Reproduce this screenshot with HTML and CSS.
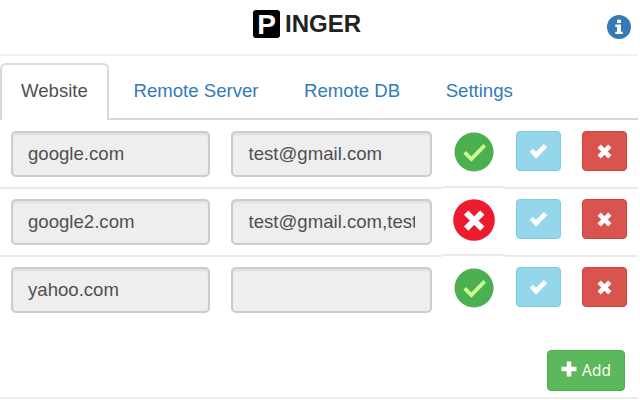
FILE: index.html
```html
<!DOCTYPE html>
<html lang="en">
<head>
<meta charset="utf-8">
<title>Pinger</title>
<link rel="stylesheet" href="styles.css">
</head>
<body>
<svg class="defs" width="0" height="0" aria-hidden="true">
  <symbol id="ok" viewBox="0 0 18 16"><path d="M1.2 8.3 3.6 5.9 6.6 8.7 14.2 1.3 16.9 4 6.7 14.4Z" fill="#fff" stroke="#fff" stroke-width=".8"/></symbol>
  <symbol id="remove" viewBox="0 0 16 16"><path d="M3 3 13 13M13 3 3 13" stroke="#fff" stroke-width="4.4"/></symbol>
  <symbol id="up" viewBox="0 0 42 42"><circle cx="21" cy="21" r="19.5" fill="#4caf50"/><path d="m11.7 21.4 6.6 6.6 13.4-13.6" fill="none" stroke="#ccff90" stroke-width="3.7"/></symbol>
  <symbol id="down" viewBox="0 0 42 42"><circle cx="21" cy="21" r="20.8" fill="#ed1b2e"/><path d="m13.1 13.6 16.2 16M29.3 13.6l-16.2 16" stroke="#fff" stroke-width="6.2"/></symbol>
</svg>
<header class="header">
  <span class="logo">P</span><h1 class="title">INGER</h1>
  <svg class="info" viewBox="0 0 24 24"><circle cx="12" cy="12" r="12" fill="#337ab7"/><path d="M10 4.7h4v3.2h-4zM8.3 9.5H14v7.2h1.8v2.4H8.3v-2.4H10v-4.8H8.3z" fill="#fff"/></svg>
</header>
<nav class="tabs">
  <a class="tab active">Website</a>
  <a class="tab">Remote Server</a>
  <a class="tab">Remote DB</a>
  <a class="tab">Settings</a>
</nav>
<main class="list">
  <div class="row">
    <div class="field">google.com</div><div class="field">test@gmail.com</div>
    <div class="status"><svg><use href="#up"/></svg></div>
    <button class="btn save"><svg><use href="#ok"/></svg></button>
    <button class="btn delete"><svg><use href="#remove"/></svg></button>
  </div>
  <div class="row">
    <div class="field">google2.com</div><div class="field"><span class="value">test@gmail.com,test</span></div>
    <div class="status"><svg><use href="#down"/></svg></div>
    <button class="btn save"><svg><use href="#ok"/></svg></button>
    <button class="btn delete"><svg><use href="#remove"/></svg></button>
  </div>
  <div class="row">
    <div class="field">yahoo.com</div><div class="field"></div>
    <div class="status"><svg><use href="#up"/></svg></div>
    <button class="btn save"><svg><use href="#ok"/></svg></button>
    <button class="btn delete"><svg><use href="#remove"/></svg></button>
  </div>
</main>
<footer class="footer">
  <button class="btn add"><svg viewBox="0 0 16 16"><path d="M8 .5v15M.5 8h15" stroke="#fff" stroke-width="4.6"/></svg>Add</button>
</footer>
</body>
</html>
```
FILE: styles.css
```css
* { box-sizing: border-box; }
body {
  margin: 0;
  width: 640px;
  height: 400px;
  overflow: hidden;
  background: #fff;
  color: #505050;
  font: 18.6px/26px "Liberation Sans", Arial, sans-serif;
}
.defs { display: block; height: 0; }
.header {
  width: 638px;
  height: 56px;
  display: flex;
  align-items: flex-start;
  padding: 10px 7px 0 253px;
  border-bottom: 2px solid #f2f2f2;
}
.logo {
  width: 27px;
  height: 28px;
  border-radius: 3px;
  background: #000;
  color: #fff;
  font-size: 28px;
  font-weight: bold;
  line-height: 30px;
  text-align: center;
}
.title {
  margin: 0 0 0 5px;
  color: #222;
  font-size: 24px;
  line-height: 28px;
}
.info { width: 24px; height: 24px; margin: 5px 0 0 auto; }
.tabs {
  width: 638px;
  height: 64px;
  display: flex;
  padding-top: 7px;
  border-bottom: 2px solid #d9d9d9;
}
.tab {
  height: 57px;
  padding: 13px 20px 0;
  margin-right: 1.5px;
  border: 2px solid transparent;
  border-bottom: 0;
  color: #337ab7;
  white-space: nowrap;
}
.tab.active {
  width: 109px;
  margin-right: 2.5px;
  padding-left: 19px;
  border-color: #d9d9d9;
  border-radius: 6px 6px 0 0;
  background: #fff;
  color: #505050;
}
.list { padding-top: 1px; }
.row {
  width: 638px;
  height: 68px;
  display: grid;
  grid-template-columns: 200.5px 231px 63px 56px 67px;
  padding: 10px 0 0 10.5px;
  border-bottom: 2px solid #eaeaea;
}
.row:last-child { border: 0; }
.field {
  width: 199px;
  height: 46px;
  padding: 8px 14px 8px 15.5px;
  border: 2px solid #ccc;
  border-radius: 5px;
  background: #eee;
  box-shadow: inset 0 2px 2px rgba(0, 0, 0, .06);
  white-space: nowrap;
}
.field + .field { width: 201px; margin-left: 20px; }
.value { display: block; width: 166px; overflow: hidden; }
.status {
  height: 58px;
  border-bottom: 2px solid #eaeaea;
  margin-top: -1px;
  background: #fff;
  box-shadow: 0 1px #fff;
}
.row:last-child .status { border: 0; }
.status svg { display: block; width: 42px; height: 42px; margin: .5px auto 0; }
.btn {
  display: flex;
  align-items: center;
  justify-content: center;
  width: 45px;
  height: 40px;
  padding: 0;
  border: 1px solid;
  border-radius: 4px;
}
.save { margin-left: 11px; background: #95d6ea; border-color: #7bcde6; }
.save svg { width: 19px; height: 17px; }
.delete { margin-left: 21px; background: #d9534f; border-color: #d43f3a; }
.delete svg { width: 17px; height: 17px; }
.footer {
  width: 638px;
  height: 74px;
  padding: 25px 13px 0 0;
  border-bottom: 2px solid #ececec;
}
.add {
  width: 78px;
  height: 41px;
  margin-left: auto;
  gap: 5px;
  color: #fff;
  background: #5cb85c;
  border-color: #4cae4c;
  font: 15.5px/20px "Open Sans", sans-serif;
  padding-bottom: 2px;
}
.add svg { width: 16px; height: 16px; margin-top: -2px; }
```
